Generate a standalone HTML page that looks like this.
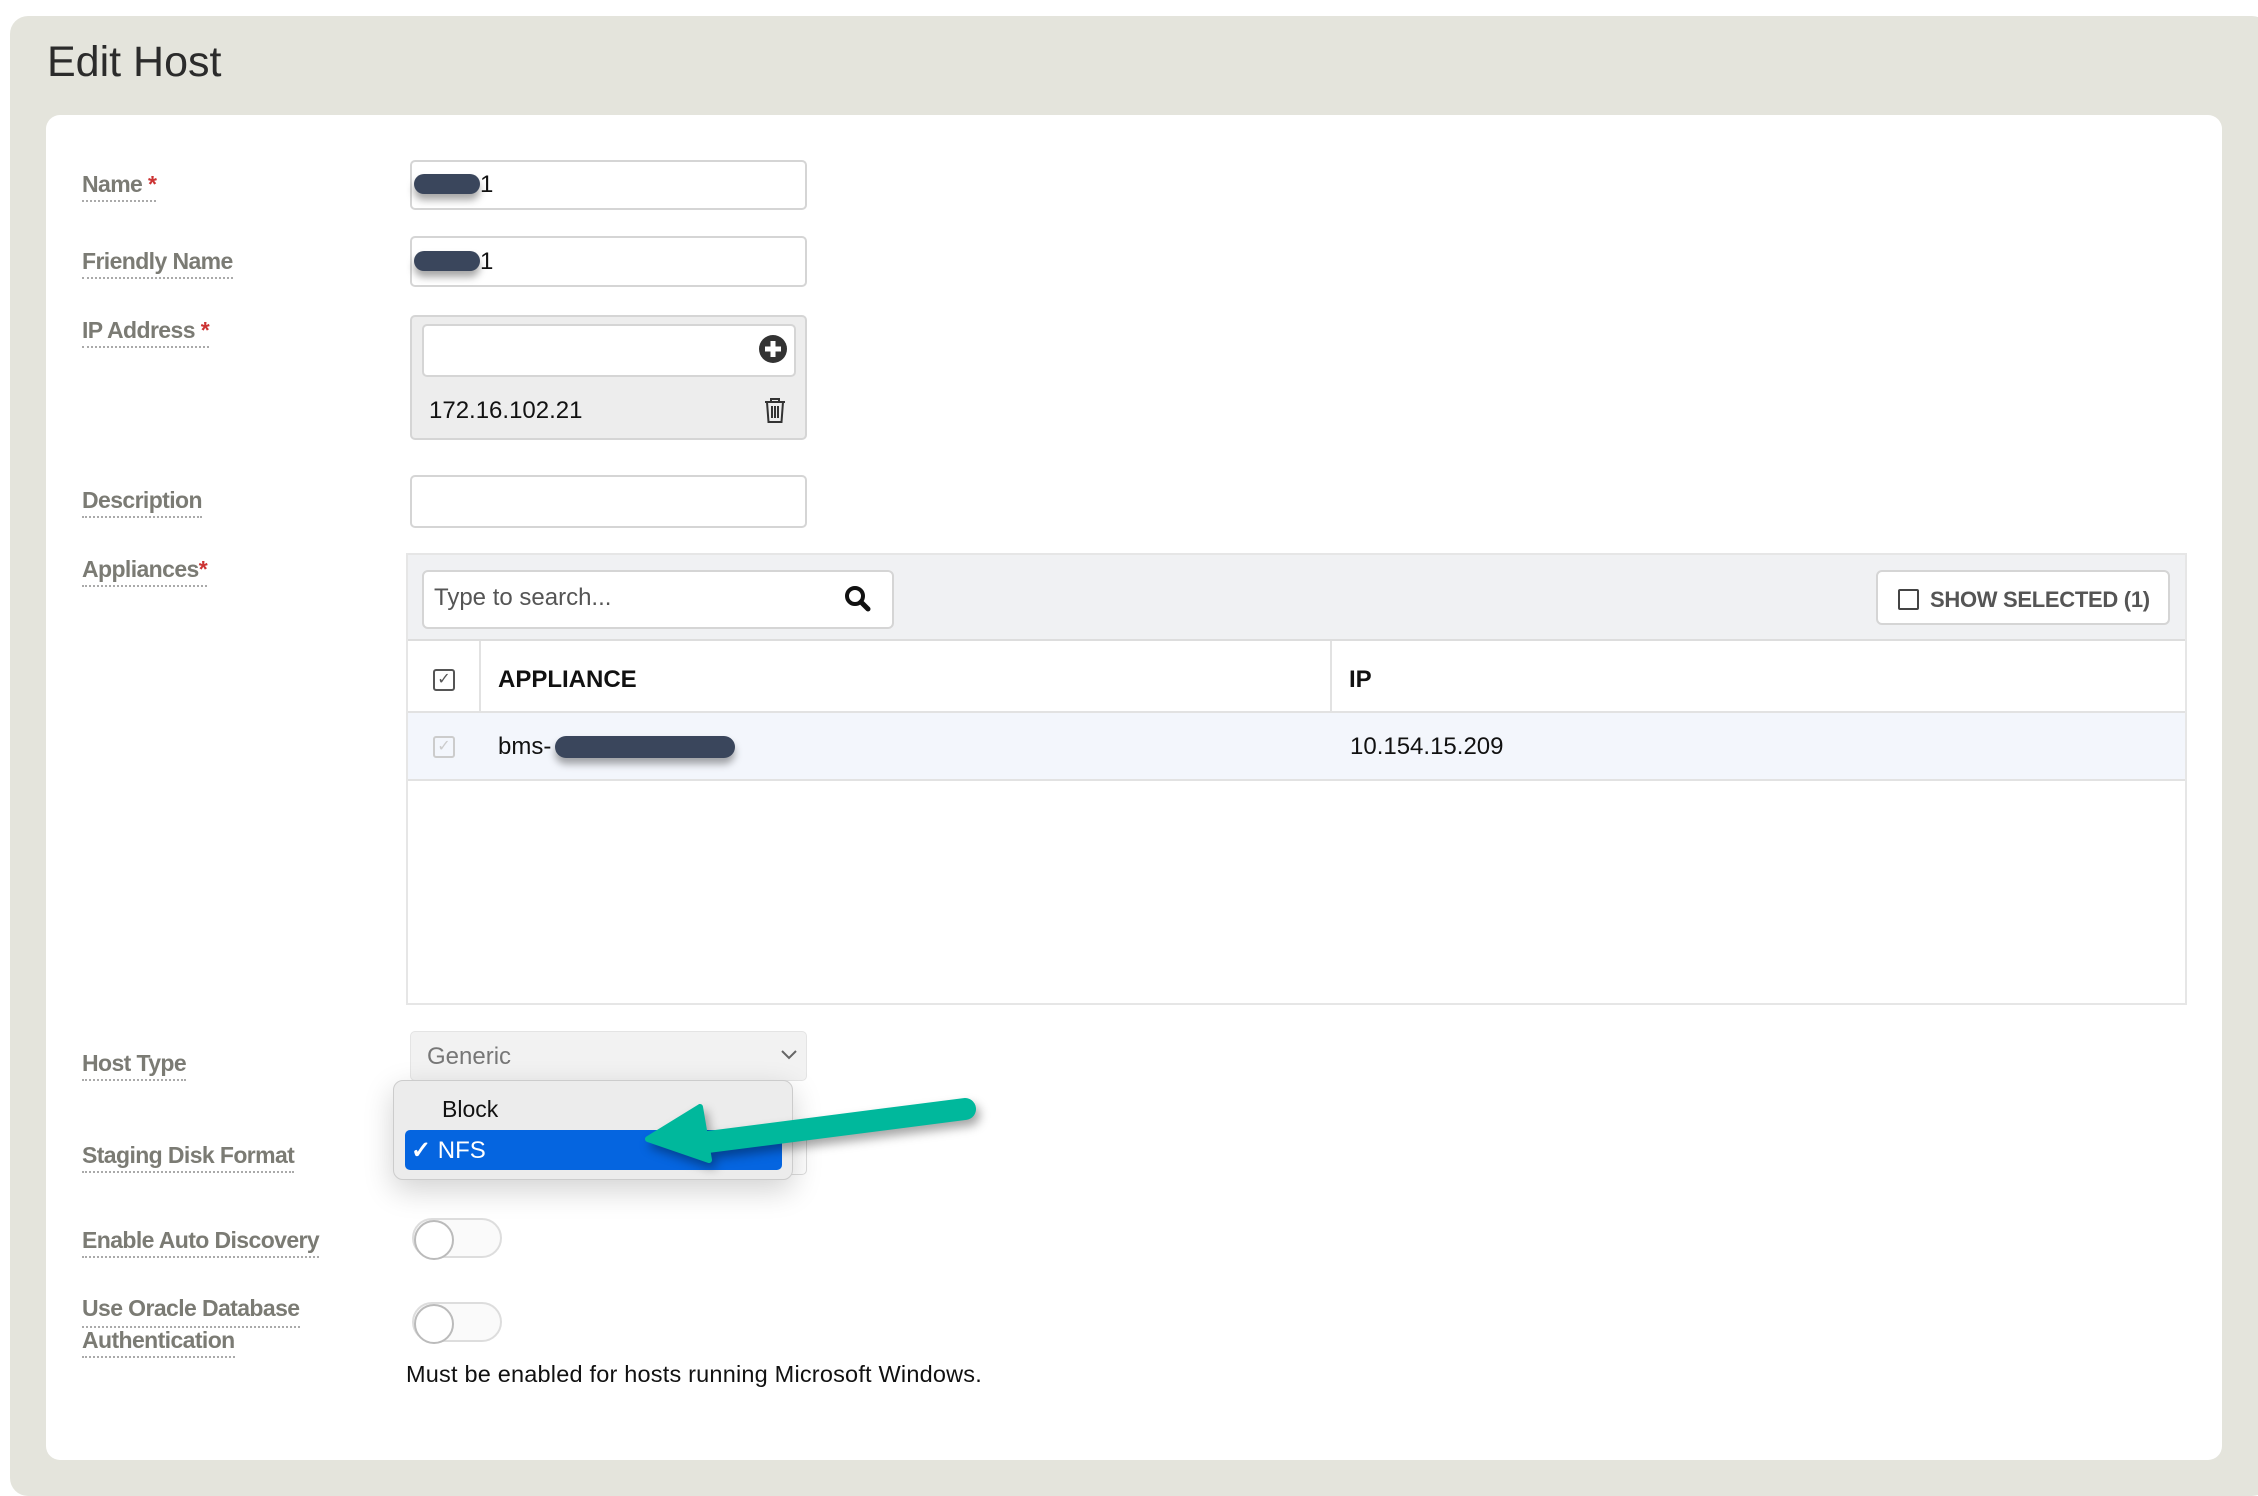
<!DOCTYPE html>
<html><head><meta charset="utf-8"><style>
*{box-sizing:border-box;margin:0;padding:0}
body{width:2258px;height:1482px;background:#fff;font-family:"Liberation Sans",Arial,sans-serif;position:relative;overflow:hidden}
.abs{position:absolute}
.panel{left:10px;top:16px;width:2260px;height:1480px;background:#e4e4dc;border-radius:18px}
.title{left:47px;top:38px;font-size:43px;color:#2b2b2b}
.card{left:46px;top:115px;width:2176px;height:1345px;background:#fff;border-radius:14px}
.lbl{position:absolute;left:82px;font-size:23px;color:#7b7b74;font-weight:bold;letter-spacing:-0.6px;border-bottom:2px dotted #aaa;line-height:28px;padding-bottom:2px}
.lbl .r{color:#c33}
.inp{position:absolute;background:#fff;border:2px solid #d5d5d5;border-radius:5px}
.blob{position:absolute;background:#3a465c;border-radius:12px;box-shadow:0 6px 8px rgba(0,0,0,.35)}
.txt{position:absolute;font-size:24px;color:#111}
.tog{position:absolute;width:90px;height:40px;border:2px solid #ddd;border-radius:20px;background:#fafafa}
.tog:after{content:"";position:absolute;left:0;top:0;width:36px;height:36px;border-radius:50%;border:2px solid #bbb;background:#fff}
</style></head><body>
<div class="abs panel"></div>
<div class="abs title">Edit Host</div>
<div class="abs card"></div>

<div class="lbl" style="top:170px">Name <span class="r">*</span></div>
<div class="lbl" style="top:247px">Friendly Name</div>
<div class="lbl" style="top:316px">IP Address <span class="r">*</span></div>
<div class="lbl" style="top:486px">Description</div>
<div class="lbl" style="top:555px">Appliances<span class="r">*</span></div>
<div class="lbl" style="top:1049px">Host Type</div>
<div class="lbl" style="top:1141px">Staging Disk Format</div>
<div class="lbl" style="top:1226px">Enable Auto Discovery</div>
<div class="lbl" style="top:1294px;border:none">Use Oracle Database</div>
<div class="lbl" style="top:1294px;width:218px;height:34px;"></div>
<div class="lbl" style="top:1326px">Authentication</div>

<div class="inp" style="left:410px;top:160px;width:397px;height:50px"></div>
<div class="blob" style="left:414px;top:174px;width:66px;height:20px"></div>
<div class="txt" style="left:480px;top:171px">1</div>
<div class="inp" style="left:410px;top:236px;width:397px;height:51px"></div>
<div class="blob" style="left:414px;top:251px;width:66px;height:20px"></div>
<div class="txt" style="left:480px;top:248px">1</div>

<div class="inp" style="left:410px;top:315px;width:397px;height:125px;background:#ededed"></div>
<div class="inp" style="left:422px;top:324px;width:374px;height:53px"></div>
<svg class="abs" style="left:758px;top:334px" width="30" height="30" viewBox="0 0 30 30"><circle cx="15" cy="15" r="14" fill="#333"/><rect x="7" y="12.5" width="16" height="5" fill="#fff"/><rect x="12.5" y="7" width="5" height="16" fill="#fff"/></svg>
<div class="txt" style="left:429px;top:397px">172.16.102.21</div>
<svg class="abs" style="left:763px;top:396px" width="24" height="28" viewBox="0 0 24 28" fill="none" stroke="#333" stroke-width="2"><path d="M2 6h20M8 6V3h8v3M4 6l1.5 20h13L20 6M9 10v12M12 10v12M15 10v12"/></svg>

<div class="inp" style="left:410px;top:475px;width:397px;height:53px"></div>

<div class="abs" style="left:406px;top:553px;width:1781px;height:452px;border:2px solid #e6e6e6;background:#fff"></div>
<div class="abs" style="left:408px;top:555px;width:1777px;height:86px;background:#f0f1f3;border-bottom:2px solid #ddd"></div>
<div class="inp" style="left:422px;top:570px;width:472px;height:59px;border-radius:6px"></div>
<div class="txt" style="left:434px;top:584px;color:#555">Type to search...</div>
<svg class="abs" style="left:844px;top:585px" width="28" height="28" viewBox="0 0 28 28"><circle cx="11" cy="11" r="8" fill="none" stroke="#111" stroke-width="4"/><path d="M17 17l7 7" stroke="#111" stroke-width="5" stroke-linecap="round"/></svg>
<div class="inp" style="left:1876px;top:570px;width:294px;height:55px;border-radius:6px"></div>
<div class="abs" style="left:1898px;top:589px;width:21px;height:21px;border:2px solid #444;border-radius:2px"></div>
<div class="txt" style="left:1930px;top:587px;color:#555;font-weight:bold;font-size:22px;letter-spacing:-0.3px">SHOW SELECTED (1)</div>

<div class="abs" style="left:479px;top:641px;width:2px;height:70px;background:#e2e2e2"></div>
<div class="abs" style="left:1330px;top:641px;width:2px;height:70px;background:#e2e2e2"></div>
<div class="abs" style="left:433px;top:669px;width:22px;height:22px;border:2px solid #555;border-radius:3px;font-size:16px;line-height:18px;text-align:center;color:#555">✓</div>
<div class="txt" style="left:498px;top:666px;font-weight:bold">APPLIANCE</div>
<div class="txt" style="left:1349px;top:666px;font-weight:bold">IP</div>
<div class="abs" style="left:408px;top:711px;width:1777px;height:70px;background:#f3f6fc;border-top:2px solid #e2e2e2;border-bottom:2px solid #e2e2e2"></div>
<div class="abs" style="left:433px;top:736px;width:22px;height:22px;border:2px solid #ccc;border-radius:3px;font-size:16px;line-height:18px;text-align:center;color:#ccc">✓</div>
<div class="txt" style="left:498px;top:733px">bms-</div>
<div class="blob" style="left:555px;top:736px;width:180px;height:22px"></div>
<div class="txt" style="left:1350px;top:733px">10.154.15.209</div>

<div class="abs" style="left:410px;top:1031px;width:397px;height:50px;background:#f2f2f2;border:1px solid #e4e4e4;border-radius:5px"></div>
<div class="txt" style="left:427px;top:1043px;color:#777">Generic</div>
<svg class="abs" style="left:780px;top:1049px" width="18" height="12" viewBox="0 0 18 12"><path d="M2 2l7 7 7-7" fill="none" stroke="#666" stroke-width="2"/></svg>
<div class="abs" style="left:410px;top:1125px;width:397px;height:50px;background:#fff;border:1px solid #ddd;border-radius:5px"></div>

<div class="abs" style="left:393px;top:1080px;width:400px;height:100px;background:#ececec;border:1px solid #ccc;border-radius:10px;box-shadow:0 10px 30px rgba(0,0,0,.18)"></div>
<div class="txt" style="left:442px;top:1096px;font-size:23px">Block</div>
<div class="abs" style="left:405px;top:1130px;width:377px;height:40px;background:#0565e0;border-radius:5px"></div>
<div class="txt" style="left:411px;top:1136px;font-size:24px;color:#fff"><b>✓</b> NFS</div>

<svg class="abs" style="left:0;top:0" width="2258" height="1482"><g style="filter:drop-shadow(4px 6px 5px rgba(0,0,0,.35))"><path d="M965 1109L700 1143" stroke="#00b89c" stroke-width="22" stroke-linecap="round"/><path d="M700 1107L648 1139L709 1160Z" fill="#00b89c" stroke="#00b89c" stroke-width="6" stroke-linejoin="round"/></g></svg>

<div class="tog" style="left:412px;top:1218px"></div>
<div class="tog" style="left:412px;top:1302px"></div>
<div class="txt" style="left:406px;top:1361px;font-size:23.5px;letter-spacing:0.2px">Must be enabled for hosts running Microsoft Windows.</div>
</body></html>
